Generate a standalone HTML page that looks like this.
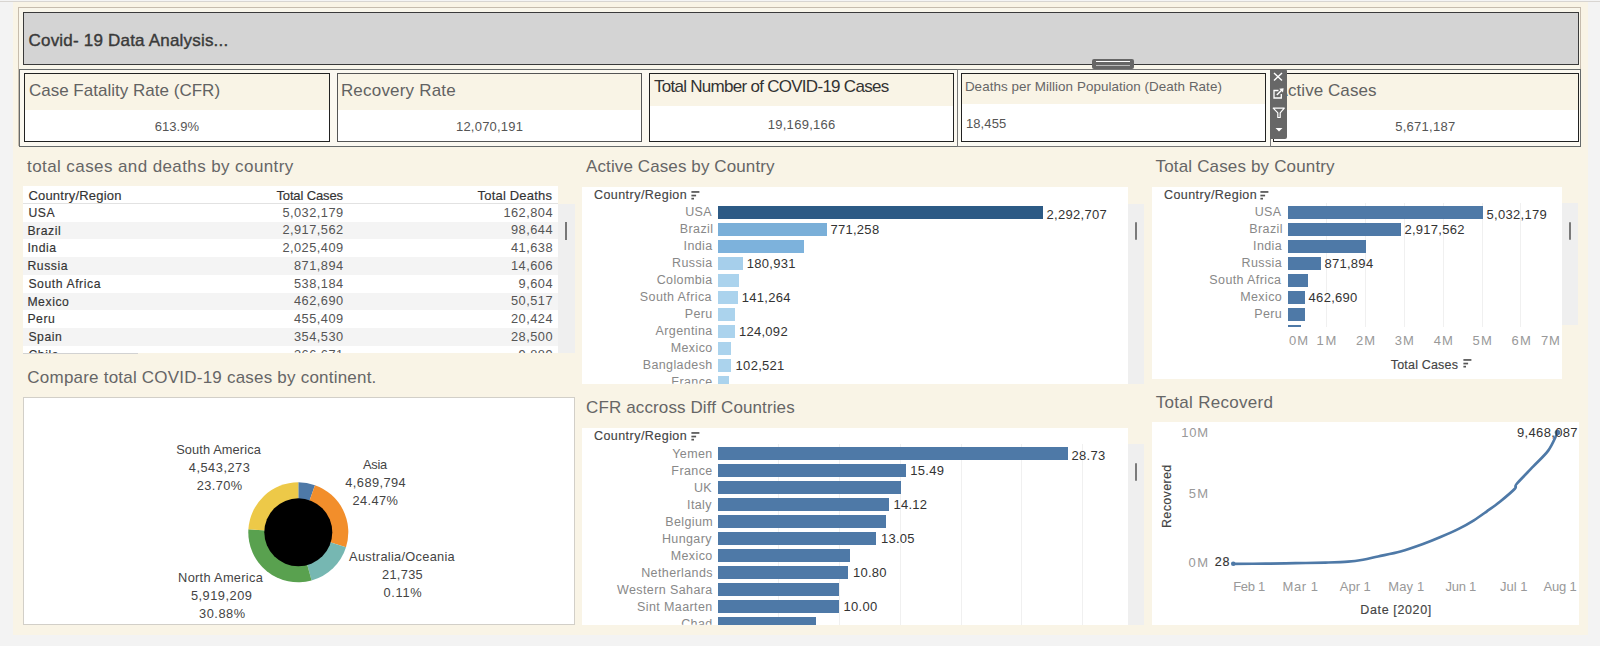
<!DOCTYPE html>
<html><head><meta charset="utf-8">
<style>
*{margin:0;padding:0;box-sizing:border-box}
html,body{width:1600px;height:646px;overflow:hidden;background:#f3f3f3;font-family:"Liberation Sans",sans-serif}
.a{position:absolute;white-space:nowrap}
</style></head><body>
<div class="a" style="left:13.00px;top:2.00px;width:1575.00px;height:633.00px;background:#f9f4e6;"></div>
<div class="a" style="left:0.00px;top:0.00px;width:1600.00px;height:1.00px;background:#f4f4f4;"></div>
<div class="a" style="left:0.00px;top:1.00px;width:1600.00px;height:1.00px;background:#d8d5d1;"></div>
<div class="a" style="left:18.00px;top:7.00px;width:1563.00px;height:139.00px;background:#f9f6eb;border:1px solid #c6bcad"></div>
<div class="a" style="left:23.00px;top:12.00px;width:1556.00px;height:53.00px;background:#d4d4d4;border:1px solid #3a3a3a"></div>
<div class="a" style="left:19.00px;top:69.00px;width:1562.00px;height:77.50px;background:#fbf8f0;border:1px solid #666a6a"></div>
<div class="a" style="left:24.00px;top:73.00px;width:306.00px;height:69.00px;background:#fff;border:1px solid #222"></div>
<div class="a" style="left:25.00px;top:74.00px;width:304.00px;height:36.00px;background:#f9f4e6;"></div>
<div class="a" style="left:337.00px;top:73.00px;width:305.00px;height:69.00px;background:#fff;border:1px solid #555"></div>
<div class="a" style="left:338.00px;top:74.00px;width:303.00px;height:36.00px;background:#f9f4e6;"></div>
<div class="a" style="left:649.00px;top:73.00px;width:305.00px;height:69.00px;background:#fff;border:1px solid #222"></div>
<div class="a" style="left:650.00px;top:74.00px;width:303.00px;height:31.50px;background:#f9f4e6;"></div>
<div class="a" style="left:956.50px;top:69.00px;width:314.00px;height:77.50px;background:#fbfaf3;border:1px solid #777"></div>
<div class="a" style="left:961.00px;top:73.00px;width:305.00px;height:69.00px;background:#fff;border:1px solid #222"></div>
<div class="a" style="left:962.00px;top:74.00px;width:303.00px;height:30.00px;background:#f9f4e6;"></div>
<div class="a" style="left:1272.50px;top:73.00px;width:306.00px;height:69.00px;background:#fff;border:1px solid #222"></div>
<div class="a" style="left:1273.50px;top:74.00px;width:304.00px;height:35.50px;background:#f9f4e6;"></div>
<div class="a" style="left:23.30px;top:186.00px;width:534.70px;height:167.00px;background:#fff;"></div>
<div class="a" style="left:23.30px;top:203.30px;width:534.70px;height:1.00px;background:#e2e2e2;"></div>
<div class="a" style="left:23.30px;top:221.55px;width:534.70px;height:17.75px;background:#f4f4f4;"></div>
<div class="a" style="left:23.30px;top:257.05px;width:534.70px;height:17.75px;background:#f4f4f4;"></div>
<div class="a" style="left:23.30px;top:292.55px;width:534.70px;height:17.75px;background:#f4f4f4;"></div>
<div class="a" style="left:23.30px;top:328.05px;width:534.70px;height:17.75px;background:#f4f4f4;"></div>
<div class="a" style="left:558.00px;top:204.00px;width:17.00px;height:149.00px;background:#efefef;"></div>
<div class="a" style="left:565.00px;top:221.50px;width:2.20px;height:18.00px;background:#777;"></div>
<div class="a" style="left:23.00px;top:352.70px;width:115.00px;height:1.20px;background:#d2d2d2;"></div>
<div class="a" style="left:582.00px;top:186.50px;width:546.00px;height:197.20px;background:#fff;"></div>
<div class="a" style="left:1128.00px;top:203.60px;width:16.00px;height:180.10px;background:#efefef;"></div>
<div class="a" style="left:1134.70px;top:222.00px;width:2.00px;height:18.00px;background:#7a7a7a;border-radius:1px"></div>
<div class="a" style="left:582px;top:186.5px;width:546px;height:197.20px;overflow:hidden"><div class="a" style="left:136.20px;top:19.50px;width:324.80px;height:12.7px;background:#2c5a85"></div><div class="a" style="left:136.20px;top:36.50px;width:108.60px;height:12.7px;background:#7aafd8"></div><div class="a" style="left:136.20px;top:53.50px;width:85.55px;height:12.7px;background:#7db2dc"></div><div class="a" style="left:136.20px;top:70.50px;width:24.40px;height:12.7px;background:#a6cfeb"></div><div class="a" style="left:136.20px;top:87.50px;width:20.70px;height:12.7px;background:#abd3ed"></div><div class="a" style="left:136.20px;top:104.50px;width:19.40px;height:12.7px;background:#abd3ed"></div><div class="a" style="left:136.20px;top:121.50px;width:16.60px;height:12.7px;background:#abd3ed"></div><div class="a" style="left:136.20px;top:138.50px;width:16.60px;height:12.7px;background:#abd3ed"></div><div class="a" style="left:136.20px;top:155.50px;width:13.30px;height:12.7px;background:#abd3ed"></div><div class="a" style="left:136.20px;top:172.50px;width:13.30px;height:12.7px;background:#abd3ed"></div><div class="a" style="left:136.20px;top:189.50px;width:10.50px;height:12.7px;background:#abd3ed"></div></div>
<svg class="a" style="left:690.8px;top:191.4px" width="10" height="9" viewBox="0 0 10 9"><rect x="0.4" y="0.1" width="8" height="1.7" fill="#555"/><rect x="0.4" y="3.7" width="4.7" height="1.7" fill="#555"/><rect x="0.4" y="6.8" width="2.6" height="1.7" fill="#555"/></svg>
<div class="a" style="left:1151.50px;top:186.50px;width:410.50px;height:192.70px;background:#fff;"></div>
<div class="a" style="left:1562.00px;top:203.40px;width:16.00px;height:121.60px;background:#efefef;"></div>
<div class="a" style="left:1568.70px;top:221.80px;width:2.00px;height:18.00px;background:#7a7a7a;border-radius:1px"></div>
<div class="a" style="left:1326.30px;top:203.40px;width:1.00px;height:123.30px;background:#f0f0f0;"></div>
<div class="a" style="left:1365.10px;top:203.40px;width:1.00px;height:123.30px;background:#f0f0f0;"></div>
<div class="a" style="left:1403.90px;top:203.40px;width:1.00px;height:123.30px;background:#f0f0f0;"></div>
<div class="a" style="left:1442.70px;top:203.40px;width:1.00px;height:123.30px;background:#f0f0f0;"></div>
<div class="a" style="left:1481.50px;top:203.40px;width:1.00px;height:123.30px;background:#f0f0f0;"></div>
<div class="a" style="left:1520.30px;top:203.40px;width:1.00px;height:123.30px;background:#f0f0f0;"></div>
<div class="a" style="left:1151.5px;top:186.5px;width:410.5px;height:140.20px;overflow:hidden"><div class="a" style="left:136.20px;top:19.50px;width:194.90px;height:12.7px;background:#4e79a7"></div><div class="a" style="left:136.20px;top:36.50px;width:112.90px;height:12.7px;background:#4e79a7"></div><div class="a" style="left:136.20px;top:53.50px;width:78.30px;height:12.7px;background:#4e79a7"></div><div class="a" style="left:136.20px;top:70.50px;width:33.30px;height:12.7px;background:#4e79a7"></div><div class="a" style="left:136.20px;top:87.50px;width:20.30px;height:12.7px;background:#4e79a7"></div><div class="a" style="left:136.20px;top:104.50px;width:17.00px;height:12.7px;background:#4e79a7"></div><div class="a" style="left:136.20px;top:121.50px;width:17.30px;height:12.7px;background:#4e79a7"></div><div class="a" style="left:136.20px;top:138.50px;width:13.30px;height:12.7px;background:#4e79a7"></div></div>
<svg class="a" style="left:1260.3px;top:191.4px" width="10" height="9" viewBox="0 0 10 9"><rect x="0.4" y="0.1" width="8" height="1.7" fill="#555"/><rect x="0.4" y="3.7" width="4.7" height="1.7" fill="#555"/><rect x="0.4" y="6.8" width="2.6" height="1.7" fill="#555"/></svg>
<svg class="a" style="left:1463.1px;top:359.1px" width="10" height="9" viewBox="0 0 10 9"><rect x="0.4" y="0.1" width="8" height="1.7" fill="#555"/><rect x="0.4" y="3.7" width="4.7" height="1.7" fill="#555"/><rect x="0.4" y="6.8" width="2.6" height="1.7" fill="#555"/></svg>
<div class="a" style="left:582.00px;top:427.50px;width:545.80px;height:197.20px;background:#fff;"></div>
<div class="a" style="left:1127.80px;top:444.30px;width:16.00px;height:180.40px;background:#efefef;"></div>
<div class="a" style="left:1134.50px;top:462.70px;width:2.00px;height:18.00px;background:#7a7a7a;border-radius:1px"></div>
<div class="a" style="left:778.40px;top:444.30px;width:1.00px;height:180.40px;background:#f0f0f0;"></div>
<div class="a" style="left:839.10px;top:444.30px;width:1.00px;height:180.40px;background:#f0f0f0;"></div>
<div class="a" style="left:899.80px;top:444.30px;width:1.00px;height:180.40px;background:#f0f0f0;"></div>
<div class="a" style="left:960.50px;top:444.30px;width:1.00px;height:180.40px;background:#f0f0f0;"></div>
<div class="a" style="left:1021.20px;top:444.30px;width:1.00px;height:180.40px;background:#f0f0f0;"></div>
<div class="a" style="left:1081.90px;top:444.30px;width:1.00px;height:180.40px;background:#f0f0f0;"></div>
<div class="a" style="left:582px;top:427.5px;width:545.8px;height:197.20px;overflow:hidden"><div class="a" style="left:136.20px;top:19.70px;width:349.40px;height:12.7px;background:#4e79a7"></div><div class="a" style="left:136.20px;top:36.70px;width:187.70px;height:12.7px;background:#4e79a7"></div><div class="a" style="left:136.20px;top:53.70px;width:182.70px;height:12.7px;background:#4e79a7"></div><div class="a" style="left:136.20px;top:70.70px;width:170.90px;height:12.7px;background:#4e79a7"></div><div class="a" style="left:136.20px;top:87.70px;width:167.70px;height:12.7px;background:#4e79a7"></div><div class="a" style="left:136.20px;top:104.70px;width:158.30px;height:12.7px;background:#4e79a7"></div><div class="a" style="left:136.20px;top:121.70px;width:131.80px;height:12.7px;background:#4e79a7"></div><div class="a" style="left:136.20px;top:138.70px;width:130.30px;height:12.7px;background:#4e79a7"></div><div class="a" style="left:136.20px;top:155.70px;width:120.90px;height:12.7px;background:#4e79a7"></div><div class="a" style="left:136.20px;top:172.70px;width:120.90px;height:12.7px;background:#4e79a7"></div><div class="a" style="left:136.20px;top:189.70px;width:97.40px;height:12.7px;background:#4e79a7"></div></div>
<svg class="a" style="left:690.8px;top:432.4px" width="10" height="9" viewBox="0 0 10 9"><rect x="0.4" y="0.1" width="8" height="1.7" fill="#555"/><rect x="0.4" y="3.7" width="4.7" height="1.7" fill="#555"/><rect x="0.4" y="6.8" width="2.6" height="1.7" fill="#555"/></svg>
<div class="a" style="left:23.30px;top:397.30px;width:551.50px;height:227.30px;background:#fff;border:1px solid #d2cfc8"></div>
<svg class="a" style="left:23.3px;top:397.3px" width="552" height="228"><path d="M275.30 135.30 L275.30 85.30 A50 50 0 0 1 291.99 88.17 Z" fill="#4e79a7"/><path d="M275.30 135.30 L291.99 88.17 A50 50 0 0 1 322.99 150.34 Z" fill="#f28e2b"/><path d="M275.30 135.30 L322.99 150.34 A50 50 0 0 1 288.58 183.50 Z" fill="#76b7b2"/><path d="M275.30 135.30 L288.58 183.50 A50 50 0 0 1 225.39 132.33 Z" fill="#59a14f"/><path d="M275.30 135.30 L225.39 132.33 A50 50 0 0 1 275.30 85.30 Z" fill="#edc948"/><circle cx="275.30" cy="135.30" r="34" fill="#000"/></svg>
<div class="a" style="left:1151.50px;top:422.00px;width:427.80px;height:203.00px;background:#fff;"></div>
<svg class="a" style="left:1151.5px;top:422px" width="428" height="203"><path d="M81.25 141.80 C86.62 141.77 103.12 141.75 113.50 141.65 C123.88 141.55 133.50 141.38 143.50 141.20 C153.50 141.03 164.75 140.85 173.50 140.60 C182.25 140.35 189.75 140.18 196.00 139.70 C202.25 139.23 206.00 138.62 211.00 137.75 C216.00 136.88 219.75 135.83 226.00 134.45 C232.25 133.08 241.00 131.58 248.50 129.50 C256.00 127.42 264.33 124.42 271.00 122.00 C277.67 119.58 282.48 117.57 288.50 115.00 C294.52 112.43 301.53 109.38 307.10 106.60 C312.67 103.82 317.27 101.18 321.90 98.30 C326.53 95.42 330.57 92.40 334.90 89.30 C339.23 86.20 343.25 83.47 347.90 79.70 C352.55 75.93 360.02 69.65 362.80 66.70 C365.58 63.75 361.52 65.72 364.60 62.00 C367.68 58.28 376.03 49.97 381.30 44.40 C386.57 38.83 392.33 33.85 396.20 28.60 C400.07 23.35 402.95 15.92 404.50 12.90 C406.05 9.88 405.33 10.90 405.50 10.50" stroke="#4e79a7" stroke-width="2.7" fill="none" stroke-linejoin="round" stroke-linecap="round"/><circle cx="81.25" cy="141.79999999999995" r="2.3" fill="#4e79a7"/><circle cx="405.5" cy="10.5" r="2.8" fill="#4e79a7"/></svg>
<div class="a" style="left:28.50px;top:31.51px;font-size:17px;line-height:17px;color:#3a3a3a;letter-spacing:0.202px;-webkit-text-stroke:0.4px #3a3a3a">Covid- 19 Data Analysis...</div>
<div class="a" style="left:28.90px;top:82.16px;font-size:17px;line-height:17px;color:#626262;letter-spacing:0.015px">Case Fatality Rate (CFR)</div>
<div class="a" style="left:154.70px;top:120.20px;font-size:13px;line-height:13px;color:#555;letter-spacing:0.034px">613.9%</div>
<div class="a" style="left:340.90px;top:82.16px;font-size:17px;line-height:17px;color:#626262;letter-spacing:0.202px">Recovery Rate</div>
<div class="a" style="left:456.00px;top:120.20px;font-size:13px;line-height:13px;color:#555;letter-spacing:0.207px">12,070,191</div>
<div class="a" style="left:653.90px;top:77.91px;font-size:17px;line-height:17px;color:#333;letter-spacing:-0.715px">Total Number of COVID-19 Cases</div>
<div class="a" style="left:767.70px;top:117.80px;font-size:13px;line-height:13px;color:#555;letter-spacing:0.285px">19,169,166</div>
<div class="a" style="left:964.90px;top:79.66px;font-size:13.4px;line-height:13.4px;color:#666;letter-spacing:0.059px">Deaths per Million Population (Death Rate)</div>
<div class="a" style="left:965.90px;top:116.75px;font-size:13px;line-height:13px;color:#555;letter-spacing:0.134px">18,455</div>
<div class="a" style="left:1276.50px;top:82.06px;font-size:17px;line-height:17px;color:#626262;letter-spacing:0.072px">Active Cases</div>
<div class="a" style="left:1395.25px;top:120.25px;font-size:13px;line-height:13px;color:#555;letter-spacing:0.256px">5,671,187</div>
<div class="a" style="left:27.10px;top:157.51px;font-size:17px;line-height:17px;color:#666;letter-spacing:0.404px">total cases and deaths by country</div>
<div class="a" style="left:586.00px;top:157.51px;font-size:17px;line-height:17px;color:#666;letter-spacing:0.108px">Active Cases by Country</div>
<div class="a" style="left:1155.60px;top:157.51px;font-size:17px;line-height:17px;color:#666;letter-spacing:0.155px">Total Cases by Country</div>
<div class="a" style="left:27.35px;top:368.91px;font-size:17px;line-height:17px;color:#666;letter-spacing:0.215px">Compare total COVID-19 cases by continent.</div>
<div class="a" style="left:586.10px;top:399.11px;font-size:17px;line-height:17px;color:#666;letter-spacing:0.119px">CFR accross Diff Countries</div>
<div class="a" style="left:1155.80px;top:393.91px;font-size:17px;line-height:17px;color:#666;letter-spacing:0.290px">Total Recoverd</div>
<div class="a" style="left:28.40px;top:189.00px;font-size:13px;line-height:13px;color:#333;letter-spacing:0.212px;-webkit-text-stroke:0.15px #333">Country/Region</div>
<div class="a" style="left:276.40px;top:189.00px;font-size:13px;line-height:13px;color:#333;letter-spacing:-0.122px;-webkit-text-stroke:0.15px #333">Total Cases</div>
<div class="a" style="left:477.60px;top:189.00px;font-size:13px;line-height:13px;color:#333;letter-spacing:0.185px;-webkit-text-stroke:0.15px #333">Total Deaths</div>
<div class="a" style="left:28.40px;top:206.77px;font-size:12.2px;line-height:12.2px;color:#333;letter-spacing:0.581px;-webkit-text-stroke:0.15px #333;clip-path:inset(-10px -10px -134.03px -10px)">USA</div>
<div class="a" style="left:282.40px;top:206.66px;font-size:12.8px;line-height:12.8px;color:#555;letter-spacing:0.473px;clip-path:inset(-10px -10px -133.54px -10px)">5,032,179</div>
<div class="a" style="left:503.42px;top:206.66px;font-size:12.8px;line-height:12.8px;color:#555;letter-spacing:0.473px;clip-path:inset(-10px -10px -133.54px -10px)">162,804</div>
<div class="a" style="left:27.40px;top:224.52px;font-size:12.2px;line-height:12.2px;color:#333;letter-spacing:0.581px;-webkit-text-stroke:0.15px #333;clip-path:inset(-10px -10px -116.28px -10px)">Brazil</div>
<div class="a" style="left:282.40px;top:224.41px;font-size:12.8px;line-height:12.8px;color:#555;letter-spacing:0.473px;clip-path:inset(-10px -10px -115.79px -10px)">2,917,562</div>
<div class="a" style="left:511.01px;top:224.41px;font-size:12.8px;line-height:12.8px;color:#555;letter-spacing:0.473px;clip-path:inset(-10px -10px -115.79px -10px)">98,644</div>
<div class="a" style="left:27.40px;top:242.27px;font-size:12.2px;line-height:12.2px;color:#333;letter-spacing:0.581px;-webkit-text-stroke:0.15px #333;clip-path:inset(-10px -10px -98.53px -10px)">India</div>
<div class="a" style="left:282.40px;top:242.16px;font-size:12.8px;line-height:12.8px;color:#555;letter-spacing:0.473px;clip-path:inset(-10px -10px -98.04px -10px)">2,025,409</div>
<div class="a" style="left:511.01px;top:242.16px;font-size:12.8px;line-height:12.8px;color:#555;letter-spacing:0.473px;clip-path:inset(-10px -10px -98.04px -10px)">41,638</div>
<div class="a" style="left:27.40px;top:260.02px;font-size:12.2px;line-height:12.2px;color:#333;letter-spacing:0.581px;-webkit-text-stroke:0.15px #333;clip-path:inset(-10px -10px -80.78px -10px)">Russia</div>
<div class="a" style="left:294.02px;top:259.91px;font-size:12.8px;line-height:12.8px;color:#555;letter-spacing:0.473px;clip-path:inset(-10px -10px -80.29px -10px)">871,894</div>
<div class="a" style="left:511.01px;top:259.91px;font-size:12.8px;line-height:12.8px;color:#555;letter-spacing:0.473px;clip-path:inset(-10px -10px -80.29px -10px)">14,606</div>
<div class="a" style="left:28.40px;top:277.77px;font-size:12.2px;line-height:12.2px;color:#333;letter-spacing:0.581px;-webkit-text-stroke:0.15px #333;clip-path:inset(-10px -10px -63.03px -10px)">South Africa</div>
<div class="a" style="left:294.02px;top:277.66px;font-size:12.8px;line-height:12.8px;color:#555;letter-spacing:0.473px;clip-path:inset(-10px -10px -62.54px -10px)">538,184</div>
<div class="a" style="left:518.60px;top:277.66px;font-size:12.8px;line-height:12.8px;color:#555;letter-spacing:0.473px;clip-path:inset(-10px -10px -62.54px -10px)">9,604</div>
<div class="a" style="left:27.40px;top:295.52px;font-size:12.2px;line-height:12.2px;color:#333;letter-spacing:0.581px;-webkit-text-stroke:0.15px #333;clip-path:inset(-10px -10px -45.28px -10px)">Mexico</div>
<div class="a" style="left:294.02px;top:295.41px;font-size:12.8px;line-height:12.8px;color:#555;letter-spacing:0.473px;clip-path:inset(-10px -10px -44.79px -10px)">462,690</div>
<div class="a" style="left:511.01px;top:295.41px;font-size:12.8px;line-height:12.8px;color:#555;letter-spacing:0.473px;clip-path:inset(-10px -10px -44.79px -10px)">50,517</div>
<div class="a" style="left:27.40px;top:313.27px;font-size:12.2px;line-height:12.2px;color:#333;letter-spacing:0.581px;-webkit-text-stroke:0.15px #333;clip-path:inset(-10px -10px -27.53px -10px)">Peru</div>
<div class="a" style="left:294.02px;top:313.16px;font-size:12.8px;line-height:12.8px;color:#555;letter-spacing:0.473px;clip-path:inset(-10px -10px -27.04px -10px)">455,409</div>
<div class="a" style="left:511.01px;top:313.16px;font-size:12.8px;line-height:12.8px;color:#555;letter-spacing:0.473px;clip-path:inset(-10px -10px -27.04px -10px)">20,424</div>
<div class="a" style="left:28.40px;top:331.02px;font-size:12.2px;line-height:12.2px;color:#333;letter-spacing:0.581px;-webkit-text-stroke:0.15px #333;clip-path:inset(-10px -10px -9.78px -10px)">Spain</div>
<div class="a" style="left:294.02px;top:330.91px;font-size:12.8px;line-height:12.8px;color:#555;letter-spacing:0.473px;clip-path:inset(-10px -10px -9.29px -10px)">354,530</div>
<div class="a" style="left:511.01px;top:330.91px;font-size:12.8px;line-height:12.8px;color:#555;letter-spacing:0.473px;clip-path:inset(-10px -10px -9.29px -10px)">28,500</div>
<div class="a" style="left:28.40px;top:348.77px;font-size:12.2px;line-height:12.2px;color:#333;letter-spacing:0.581px;-webkit-text-stroke:0.15px #333;clip-path:inset(-10px -10px 7.97px -10px)">Chile</div>
<div class="a" style="left:294.02px;top:348.66px;font-size:12.8px;line-height:12.8px;color:#555;letter-spacing:0.473px;clip-path:inset(-10px -10px 8.46px -10px)">366,671</div>
<div class="a" style="left:518.60px;top:348.66px;font-size:12.8px;line-height:12.8px;color:#555;letter-spacing:0.473px;clip-path:inset(-10px -10px 8.46px -10px)">9,889</div>
<div class="a" style="left:685.14px;top:206.32px;font-size:12.5px;line-height:12.5px;color:#888;letter-spacing:0.396px;clip-path:inset(-10px -10px -164.88px -10px)">USA</div>
<div class="a" style="left:679.84px;top:223.32px;font-size:12.5px;line-height:12.5px;color:#888;letter-spacing:0.396px;clip-path:inset(-10px -10px -147.88px -10px)">Brazil</div>
<div class="a" style="left:683.56px;top:240.32px;font-size:12.5px;line-height:12.5px;color:#888;letter-spacing:0.396px;clip-path:inset(-10px -10px -130.88px -10px)">India</div>
<div class="a" style="left:672.06px;top:257.32px;font-size:12.5px;line-height:12.5px;color:#888;letter-spacing:0.396px;clip-path:inset(-10px -10px -113.88px -10px)">Russia</div>
<div class="a" style="left:656.68px;top:274.32px;font-size:12.5px;line-height:12.5px;color:#888;letter-spacing:0.396px;clip-path:inset(-10px -10px -96.88px -10px)">Colombia</div>
<div class="a" style="left:639.80px;top:291.32px;font-size:12.5px;line-height:12.5px;color:#888;letter-spacing:0.396px;clip-path:inset(-10px -10px -79.88px -10px)">South Africa</div>
<div class="a" style="left:684.66px;top:308.32px;font-size:12.5px;line-height:12.5px;color:#888;letter-spacing:0.396px;clip-path:inset(-10px -10px -62.88px -10px)">Peru</div>
<div class="a" style="left:655.57px;top:325.32px;font-size:12.5px;line-height:12.5px;color:#888;letter-spacing:0.396px;clip-path:inset(-10px -10px -45.88px -10px)">Argentina</div>
<div class="a" style="left:670.68px;top:342.32px;font-size:12.5px;line-height:12.5px;color:#888;letter-spacing:0.396px;clip-path:inset(-10px -10px -28.88px -10px)">Mexico</div>
<div class="a" style="left:642.66px;top:359.32px;font-size:12.5px;line-height:12.5px;color:#888;letter-spacing:0.396px;clip-path:inset(-10px -10px -11.88px -10px)">Bangladesh</div>
<div class="a" style="left:671.37px;top:376.32px;font-size:12.5px;line-height:12.5px;color:#888;letter-spacing:0.396px;clip-path:inset(-10px -10px 5.12px -10px)">France</div>
<div class="a" style="left:1046.50px;top:208.10px;font-size:13px;line-height:13px;color:#333;letter-spacing:0.290px">2,292,707</div>
<div class="a" style="left:830.40px;top:222.90px;font-size:13px;line-height:13px;color:#333;letter-spacing:0.290px">771,258</div>
<div class="a" style="left:746.80px;top:256.90px;font-size:13px;line-height:13px;color:#333;letter-spacing:0.290px">180,931</div>
<div class="a" style="left:741.70px;top:290.90px;font-size:13px;line-height:13px;color:#333;letter-spacing:0.290px">141,264</div>
<div class="a" style="left:738.90px;top:324.90px;font-size:13px;line-height:13px;color:#333;letter-spacing:0.290px">124,092</div>
<div class="a" style="left:735.60px;top:358.90px;font-size:13px;line-height:13px;color:#333;letter-spacing:0.290px">102,521</div>
<div class="a" style="left:593.90px;top:189.22px;font-size:12.5px;line-height:12.5px;color:#444;letter-spacing:0.461px;-webkit-text-stroke:0.15px #444">Country/Region</div>
<div class="a" style="left:1254.64px;top:206.32px;font-size:12.5px;line-height:12.5px;color:#888;letter-spacing:0.396px;clip-path:inset(-10px -10px -107.88px -10px)">USA</div>
<div class="a" style="left:1249.34px;top:223.32px;font-size:12.5px;line-height:12.5px;color:#888;letter-spacing:0.396px;clip-path:inset(-10px -10px -90.88px -10px)">Brazil</div>
<div class="a" style="left:1253.06px;top:240.32px;font-size:12.5px;line-height:12.5px;color:#888;letter-spacing:0.396px;clip-path:inset(-10px -10px -73.88px -10px)">India</div>
<div class="a" style="left:1241.56px;top:257.32px;font-size:12.5px;line-height:12.5px;color:#888;letter-spacing:0.396px;clip-path:inset(-10px -10px -56.88px -10px)">Russia</div>
<div class="a" style="left:1209.30px;top:274.32px;font-size:12.5px;line-height:12.5px;color:#888;letter-spacing:0.396px;clip-path:inset(-10px -10px -39.88px -10px)">South Africa</div>
<div class="a" style="left:1240.18px;top:291.32px;font-size:12.5px;line-height:12.5px;color:#888;letter-spacing:0.396px;clip-path:inset(-10px -10px -22.88px -10px)">Mexico</div>
<div class="a" style="left:1254.16px;top:308.32px;font-size:12.5px;line-height:12.5px;color:#888;letter-spacing:0.396px;clip-path:inset(-10px -10px -5.88px -10px)">Peru</div>
<div class="a" style="left:1486.60px;top:208.10px;font-size:13px;line-height:13px;color:#333;letter-spacing:0.290px">5,032,179</div>
<div class="a" style="left:1404.40px;top:222.90px;font-size:13px;line-height:13px;color:#333;letter-spacing:0.290px">2,917,562</div>
<div class="a" style="left:1324.40px;top:256.90px;font-size:13px;line-height:13px;color:#333;letter-spacing:0.290px">871,894</div>
<div class="a" style="left:1308.60px;top:290.90px;font-size:13px;line-height:13px;color:#333;letter-spacing:0.290px">462,690</div>
<div class="a" style="left:1163.90px;top:189.22px;font-size:12.5px;line-height:12.5px;color:#444;letter-spacing:0.461px;-webkit-text-stroke:0.15px #444">Country/Region</div>
<div class="a" style="left:1289.00px;top:333.80px;font-size:13px;line-height:13px;color:#999;letter-spacing:1.070px">0M</div>
<div class="a" style="left:1316.50px;top:333.80px;font-size:13px;line-height:13px;color:#999;letter-spacing:1.670px">1M</div>
<div class="a" style="left:1355.90px;top:333.80px;font-size:13px;line-height:13px;color:#999;letter-spacing:1.070px">2M</div>
<div class="a" style="left:1394.70px;top:333.80px;font-size:13px;line-height:13px;color:#999;letter-spacing:1.070px">3M</div>
<div class="a" style="left:1433.80px;top:333.80px;font-size:13px;line-height:13px;color:#999;letter-spacing:0.970px">4M</div>
<div class="a" style="left:1472.60px;top:333.80px;font-size:13px;line-height:13px;color:#999;letter-spacing:1.170px">5M</div>
<div class="a" style="left:1511.50px;top:333.80px;font-size:13px;line-height:13px;color:#999;letter-spacing:1.270px">6M</div>
<div class="a" style="left:1541.00px;top:333.80px;font-size:13px;line-height:13px;color:#999;letter-spacing:0.770px">7M</div>
<div class="a" style="left:1390.80px;top:358.62px;font-size:12.5px;line-height:12.5px;color:#444;letter-spacing:0.184px;-webkit-text-stroke:0.15px #444">Total Cases</div>
<div class="a" style="left:672.21px;top:447.52px;font-size:12.5px;line-height:12.5px;color:#888;letter-spacing:0.396px;clip-path:inset(-10px -10px -164.68px -10px)">Yemen</div>
<div class="a" style="left:671.37px;top:464.52px;font-size:12.5px;line-height:12.5px;color:#888;letter-spacing:0.396px;clip-path:inset(-10px -10px -147.68px -10px)">France</div>
<div class="a" style="left:693.88px;top:481.52px;font-size:12.5px;line-height:12.5px;color:#888;letter-spacing:0.396px;clip-path:inset(-10px -10px -130.68px -10px)">UK</div>
<div class="a" style="left:687.04px;top:498.52px;font-size:12.5px;line-height:12.5px;color:#888;letter-spacing:0.396px;clip-path:inset(-10px -10px -113.68px -10px)">Italy</div>
<div class="a" style="left:665.17px;top:515.52px;font-size:12.5px;line-height:12.5px;color:#888;letter-spacing:0.396px;clip-path:inset(-10px -10px -96.68px -10px)">Belgium</div>
<div class="a" style="left:661.92px;top:532.52px;font-size:12.5px;line-height:12.5px;color:#888;letter-spacing:0.396px;clip-path:inset(-10px -10px -79.68px -10px)">Hungary</div>
<div class="a" style="left:670.68px;top:549.52px;font-size:12.5px;line-height:12.5px;color:#888;letter-spacing:0.396px;clip-path:inset(-10px -10px -62.68px -10px)">Mexico</div>
<div class="a" style="left:641.18px;top:566.52px;font-size:12.5px;line-height:12.5px;color:#888;letter-spacing:0.396px;clip-path:inset(-10px -10px -45.68px -10px)">Netherlands</div>
<div class="a" style="left:617.00px;top:583.52px;font-size:12.5px;line-height:12.5px;color:#888;letter-spacing:0.396px;clip-path:inset(-10px -10px -28.68px -10px)">Western Sahara</div>
<div class="a" style="left:637.02px;top:600.52px;font-size:12.5px;line-height:12.5px;color:#888;letter-spacing:0.396px;clip-path:inset(-10px -10px -11.68px -10px)">Sint Maarten</div>
<div class="a" style="left:681.18px;top:617.52px;font-size:12.5px;line-height:12.5px;color:#888;letter-spacing:0.396px;clip-path:inset(-10px -10px 5.32px -10px)">Chad</div>
<div class="a" style="left:1071.50px;top:449.30px;font-size:13px;line-height:13px;color:#333;letter-spacing:0.290px">28.73</div>
<div class="a" style="left:910.25px;top:464.10px;font-size:13px;line-height:13px;color:#333;letter-spacing:0.290px">15.49</div>
<div class="a" style="left:893.40px;top:498.10px;font-size:13px;line-height:13px;color:#333;letter-spacing:0.290px">14.12</div>
<div class="a" style="left:880.90px;top:532.10px;font-size:13px;line-height:13px;color:#333;letter-spacing:0.290px">13.05</div>
<div class="a" style="left:852.90px;top:566.10px;font-size:13px;line-height:13px;color:#333;letter-spacing:0.290px">10.80</div>
<div class="a" style="left:843.50px;top:600.10px;font-size:13px;line-height:13px;color:#333;letter-spacing:0.290px">10.00</div>
<div class="a" style="left:593.90px;top:430.22px;font-size:12.5px;line-height:12.5px;color:#444;letter-spacing:0.461px;-webkit-text-stroke:0.15px #444">Country/Region</div>
<div class="a" style="left:176.20px;top:444.16px;font-size:12.8px;line-height:12.8px;color:#444;letter-spacing:0.116px">South America</div>
<div class="a" style="left:188.80px;top:462.26px;font-size:12.8px;line-height:12.8px;color:#444;letter-spacing:0.511px">4,543,273</div>
<div class="a" style="left:196.80px;top:480.26px;font-size:12.8px;line-height:12.8px;color:#444;letter-spacing:0.395px">23.70%</div>
<div class="a" style="left:363.00px;top:459.16px;font-size:12.8px;line-height:12.8px;color:#444;letter-spacing:-0.259px">Asia</div>
<div class="a" style="left:345.30px;top:477.16px;font-size:12.8px;line-height:12.8px;color:#444;letter-spacing:0.436px">4,689,794</div>
<div class="a" style="left:352.60px;top:495.16px;font-size:12.8px;line-height:12.8px;color:#444;letter-spacing:0.395px">24.47%</div>
<div class="a" style="left:349.10px;top:550.66px;font-size:12.8px;line-height:12.8px;color:#444;letter-spacing:0.288px">Australia/Oceania</div>
<div class="a" style="left:382.00px;top:568.76px;font-size:12.8px;line-height:12.8px;color:#444;letter-spacing:0.315px">21,735</div>
<div class="a" style="left:383.50px;top:586.76px;font-size:12.8px;line-height:12.8px;color:#444;letter-spacing:0.686px">0.11%</div>
<div class="a" style="left:178.10px;top:571.96px;font-size:12.8px;line-height:12.8px;color:#444;letter-spacing:0.303px">North America</div>
<div class="a" style="left:190.90px;top:589.96px;font-size:12.8px;line-height:12.8px;color:#444;letter-spacing:0.511px">5,919,209</div>
<div class="a" style="left:199.10px;top:608.06px;font-size:12.8px;line-height:12.8px;color:#444;letter-spacing:0.515px">30.88%</div>
<div class="a" style="left:1181.20px;top:425.80px;font-size:13px;line-height:13px;color:#999;letter-spacing:0.770px">10M</div>
<div class="a" style="left:1188.70px;top:487.30px;font-size:13px;line-height:13px;color:#999;letter-spacing:1.270px">5M</div>
<div class="a" style="left:1188.50px;top:556.10px;font-size:13px;line-height:13px;color:#999;letter-spacing:1.470px">0M</div>
<div class="a" style="left:1233.20px;top:579.70px;font-size:13px;line-height:13px;color:#999;letter-spacing:-0.328px">Feb 1</div>
<div class="a" style="left:1282.60px;top:579.70px;font-size:13px;line-height:13px;color:#999;letter-spacing:0.525px">Mar 1</div>
<div class="a" style="left:1339.80px;top:579.70px;font-size:13px;line-height:13px;color:#999;letter-spacing:-0.035px">Apr 1</div>
<div class="a" style="left:1388.20px;top:579.70px;font-size:13px;line-height:13px;color:#999;letter-spacing:0.157px">May 1</div>
<div class="a" style="left:1445.40px;top:579.70px;font-size:13px;line-height:13px;color:#999;letter-spacing:-0.243px">Jun 1</div>
<div class="a" style="left:1499.90px;top:579.70px;font-size:13px;line-height:13px;color:#999;letter-spacing:0.018px">Jul 1</div>
<div class="a" style="left:1543.50px;top:579.70px;font-size:13px;line-height:13px;color:#999;letter-spacing:-0.186px">Aug 1</div>
<div class="a" style="left:1360.30px;top:603.82px;font-size:12.5px;line-height:12.5px;color:#444;letter-spacing:0.634px;-webkit-text-stroke:0.15px #444">Date [2020]</div>
<div class="a" style="left:1214.70px;top:556.02px;font-size:12.5px;line-height:12.5px;color:#333;letter-spacing:0.848px;-webkit-text-stroke:0.15px #333">28</div>
<div class="a" style="left:1517.00px;top:426.10px;font-size:13px;line-height:13px;color:#333;letter-spacing:0.337px">9,468,087</div>
<div class="a" style="left:1135.66px;top:489.55px;width:63.49px;font-size:12.5px;line-height:12.5px;color:#444;-webkit-text-stroke:0.15px #444;letter-spacing:0.338px;transform:rotate(-90deg);transform-origin:50% 50%">Recovered</div>
<div class="a" style="left:1092px;top:58.5px;width:42px;height:10px;background:#666;border-radius:2px"></div>
<div class="a" style="left:1096.00px;top:61.00px;width:34.00px;height:1.20px;background:#fff;"></div>
<div class="a" style="left:1096.00px;top:64.50px;width:34.00px;height:1.20px;background:#bbb;"></div>
<div class="a" style="left:1269.5px;top:68.5px;width:17.5px;height:70px;background:#676767;border-radius:0 2px 2px 0"></div>
<svg class="a" style="left:1269px;top:68px" width="20" height="72" viewBox="0 0 20 72">
<path d="M5 5 L13 12.5 M13 5 L5 12.5" stroke="#fff" stroke-width="1.4" fill="none"/>
<path d="M9.5 22.5 H5 V30 H12.3 V26" stroke="#fff" stroke-width="1.3" fill="none"/>
<path d="M7.8 27 L12.8 22" stroke="#fff" stroke-width="1.4" fill="none"/>
<path d="M14.6 20.2 L10.2 20.8 L14 24.6 Z" fill="#fff"/>
<path d="M4.2 40.2 H15.3 L11.2 44.8 V49.5 H8.8 V44.8 Z" stroke="#fff" stroke-width="1.2" fill="none" stroke-linejoin="round"/>
<path d="M6.5 60 H13.5 L10 63.5 Z" fill="#fff"/>
</svg>
</body></html>
